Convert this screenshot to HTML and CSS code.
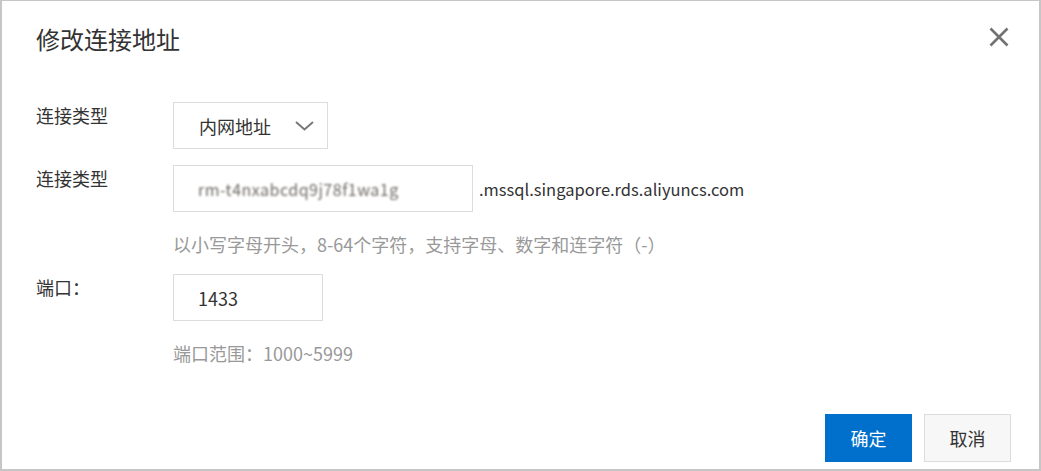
FILE: index.html
```html
<!DOCTYPE html>
<html lang="zh-CN">
<head>
<meta charset="utf-8">
<title>修改连接地址</title>
<link rel="stylesheet" href="styles.css">
</head>
<body>
<div class="dialog">
  <div class="header">
    <h1 class="title">修改连接地址</h1>
    <button class="close" aria-label="关闭">
      <svg width="20" height="20" viewBox="0 0 20 20"><path d="M1.5 1.5 L18.5 18.5 M18.5 1.5 L1.5 18.5" stroke="#727272" stroke-width="2.6" fill="none"/></svg>
    </button>
  </div>
  <div class="form">
    <div class="row">
      <div class="label">连接类型</div>
      <div class="field">
        <div class="select">
          <span>内网地址</span>
          <svg width="19" height="10" viewBox="0 0 19 10"><path d="M1 1 L9.5 8.5 L18 1" stroke="#777" stroke-width="2" fill="none"/></svg>
        </div>
      </div>
    </div>
    <div class="row">
      <div class="label">连接类型</div>
      <div class="field">
        <div class="inline">
          <div class="input wide"><span class="masked">rm-t4nxabcdq9j78f1wa1g</span></div>
          <span class="suffix">.mssql.singapore.rds.aliyuncs.com</span>
        </div>
        <div class="hint">以小写字母开头，8-64个字符，支持字母、数字和连字符（-）</div>
      </div>
    </div>
    <div class="row">
      <div class="label">端口：</div>
      <div class="field">
        <div class="input narrow">1433</div>
        <div class="hint">端口范围：1000~5999</div>
      </div>
    </div>
  </div>
  <div class="footer">
    <button class="btn primary">确定</button>
    <button class="btn">取消</button>
  </div>
</div>
</body>
</html>
```

FILE: styles.css
```css
html, body {
  margin: 0;
  padding: 0;
  background: #fff;
}
body {
  font-family: "Noto Sans CJK SC", "Noto Sans", sans-serif;
  color: #333;
  font-size: 18px;
}
.dialog {
  box-sizing: border-box;
  width: 1041px;
  height: 471px;
  border: 2px solid #c6c6c6;
  border-top-width: 1px;
  display: flex;
  flex-direction: column;
}
.header {
  display: flex;
  justify-content: space-between;
  align-items: flex-start;
  padding: 20px 30px 0 34px;
}
.title {
  margin: 0;
  font-size: 24px;
  line-height: 36px;
  font-weight: normal;
  color: #333;
}
.close {
  border: 0;
  background: none;
  padding: 0;
  margin-top: 6px;
  width: 20px;
  height: 20px;
  cursor: pointer;
}
.close svg { display: block; }
.form {
  padding: 45px 0 0 34px;
  display: flex;
  flex-direction: column;
  gap: 16px;
}
.row {
  display: flex;
  align-items: flex-start;
}
.label {
  width: 137px;
  line-height: 26px;
  color: #333;
}
.field {
  display: flex;
  flex-direction: column;
  align-items: flex-start;
}
.select {
  box-sizing: border-box;
  width: 155px;
  height: 47px;
  border: 1px solid #dcdcdc;
  display: flex;
  align-items: center;
  justify-content: space-between;
  padding: 0 13px 0 25px;
  line-height: 26px;
}
.select svg { display: block; margin-top: 1px; }
.inline {
  display: flex;
  align-items: center;
}
.input {
  box-sizing: border-box;
  height: 47px;
  border: 1px solid #dcdcdc;
  padding: 0 24px;
  display: flex;
  align-items: center;
  line-height: 26px;
}
.input.wide { width: 300px; }
.input.narrow { width: 150px; }
.masked {
  color: #6f6a66;
  filter: blur(1.2px);
  letter-spacing: 0.5px;
  font-size: 16px;
}
.suffix {
  margin-left: 6px;
  color: #333;
  font-size: 16.5px;
  line-height: 26px;
}
.hint {
  margin-top: 19px;
  line-height: 27px;
  color: #999;
}
.footer {
  margin-top: auto;
  display: flex;
  justify-content: flex-end;
  gap: 12px;
  padding: 0 28px 7px 0;
}
.btn {
  box-sizing: border-box;
  width: 87px;
  height: 48px;
  font-family: inherit;
  font-size: 18px;
  color: #333;
  background: #f7f7f7;
  border: 1px solid #dcdcdc;
  padding: 0;
  cursor: pointer;
}
.btn.primary {
  background: #0070cc;
  border-color: #0070cc;
  color: #fff;
}
```
